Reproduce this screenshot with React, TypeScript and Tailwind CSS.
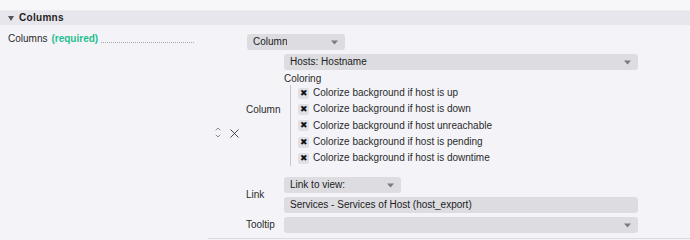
import { ChevronDown, ChevronUp, X } from "lucide-react";

const coloring = [
  "Colorize background if host is up",
  "Colorize background if host is down",
  "Colorize background if host unreachable",
  "Colorize background if host is pending",
  "Colorize background if host is downtime",
];

const Caret = () => (
  <svg width="7" height="5" viewBox="0 0 7 5" className="shrink-0">
    <path d="M0 0.5h7L3.5 4.5z" fill="#7a7a80" />
  </svg>
);

interface SelectProps {
  label?: string;
  width: string;
  caret?: boolean;
}

const Select = ({ label, width, caret = true }: SelectProps) => (
  <div
    className={`${width} h-[16px] rounded-[3px] bg-[#dcdce1] flex items-center justify-between pl-[6px] pr-[7px] text-[#222]`}
  >
    <span className="truncate">{label}</span>
    {caret && <Caret />}
  </div>
);

export default function App() {
  return (
    <div
      className="w-[690px] h-[240px] overflow-hidden bg-[#f4f4f8] text-[10px] leading-[12px] text-[#2a2a2a]"
      style={{ fontFamily: '"Liberation Sans", Arial, sans-serif' }}
    >
      {/* top strip */}
      <div className="h-[11px] bg-[#f7f7fa] border-b border-[#ececf0]" />

      {/* section header */}
      <div className="h-[14px] bg-[#e6e6ec] flex items-center pl-[8px] gap-[5px]">
        <svg width="6" height="5" viewBox="0 0 6 5">
          <path d="M0 0h6L3 5z" fill="#555" />
        </svg>
        <span className="font-bold tracking-[0.3px] text-[#1e1e1e]">Columns</span>
      </div>

      <div className="flex">
        {/* left label */}
        <div className="w-[208px] shrink-0 pl-[8px] pt-[7px] flex items-center h-[21px]">
          <span>Columns</span>
          <span className="ml-[4px] font-bold text-[#1fbf8f]">(required)</span>
          <span className="ml-[3px] w-[93px] border-b border-dotted border-[#a8a8ae] translate-y-[3px]" />
        </div>

        {/* right side */}
        <div className="flex-1 border-b border-[#dcdce0] pb-[5px]">
          <div className="pl-[39px] pt-[9px]">
            <Select label="Column" width="w-[98px]" />
          </div>

          <div className="flex mt-[4px]">
            {/* row controls */}
            <div className="w-[38px] shrink-0 flex items-start pt-[72px] pl-[6px] gap-[5px]">
              <div className="flex flex-col items-center text-[#555] -mt-[1px]">
                <ChevronUp size={8} strokeWidth={2} className="-mb-[1px]" />
                <ChevronDown size={8} strokeWidth={2} />
              </div>
              <X size={15} strokeWidth={1.4} className="text-[#333]" />
            </div>

            {/* nested fields */}
            <div className="flex-1 flex flex-col">
              <div className="flex">
                <div className="w-[38px] shrink-0 flex items-center">Column</div>
                <div className="flex flex-col">
                  <Select label="Hosts: Hostname" width="w-[354px]" />
                  <div className="mt-[3px] h-[12px] flex items-center">Coloring</div>
                  <div className="ml-[6px] border-l border-[#c8c8cc] pl-[7px] flex flex-col">
                    {coloring.map((c) => (
                      <div key={c} className="h-[16.3px] flex items-center gap-[4px]">
                        <span className="w-[11px] h-[11px] rounded-[2px] bg-[#e0e0e5] flex items-center justify-center text-[9px] leading-none text-[#111]">
                          ✖
                        </span>
                        <span>{c}</span>
                      </div>
                    ))}
                  </div>
                </div>
              </div>

              <div className="flex mt-[11px]">
                <div className="w-[38px] shrink-0 flex items-center">Link</div>
                <div className="flex flex-col gap-[4px]">
                  <Select label="Link to view:" width="w-[117px]" />
                  <Select
                    label="Services - Services of Host (host_export)"
                    width="w-[354px]"
                    caret={false}
                  />
                </div>
              </div>

              <div className="flex mt-[4px]">
                <div className="w-[38px] shrink-0 flex items-center">Tooltip</div>
                <Select width="w-[354px]" />
              </div>
            </div>
          </div>
        </div>
      </div>
    </div>
  );
}
